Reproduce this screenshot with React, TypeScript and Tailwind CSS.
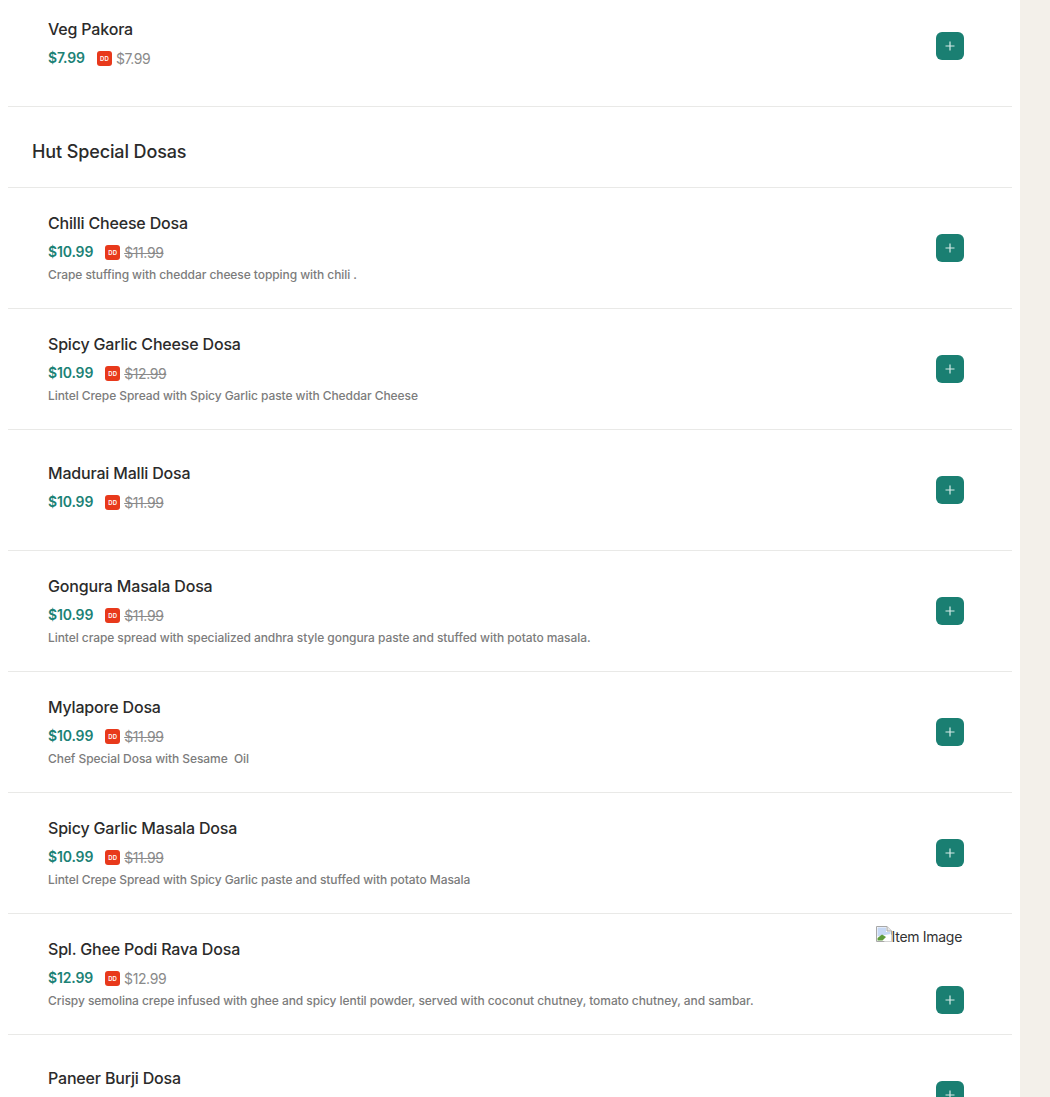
import React from 'react';

type Item = {
  name: string;
  price: string;
  oldPrice: string;
  strike?: boolean;
  desc?: string;
  image?: boolean;
};

const FONT = "font-['Inter','Noto_Sans',sans-serif]";

const special: Item[] = [
  { name: 'Chilli Cheese Dosa', price: '$10.99', oldPrice: '$11.99', strike: true, desc: 'Crape stuffing with cheddar cheese topping with chili .' },
  { name: 'Spicy Garlic Cheese Dosa', price: '$10.99', oldPrice: '$12.99', strike: true, desc: 'Lintel Crepe Spread with Spicy Garlic paste with Cheddar Cheese' },
  { name: 'Madurai Malli Dosa', price: '$10.99', oldPrice: '$11.99', strike: true },
  { name: 'Gongura Masala Dosa', price: '$10.99', oldPrice: '$11.99', strike: true, desc: 'Lintel crape spread with specialized andhra style gongura paste and stuffed with potato masala.' },
  { name: 'Mylapore Dosa', price: '$10.99', oldPrice: '$11.99', strike: true, desc: 'Chef Special Dosa with Sesame  Oil' },
  { name: 'Spicy Garlic Masala Dosa', price: '$10.99', oldPrice: '$11.99', strike: true, desc: 'Lintel Crepe Spread with Spicy Garlic paste and stuffed with potato Masala' },
  { name: 'Spl. Ghee Podi Rava Dosa', price: '$12.99', oldPrice: '$12.99', image: true, desc: 'Crispy semolina crepe infused with ghee and spicy lentil powder, served with coconut chutney, tomato chutney, and sambar.' },
  { name: 'Paneer Burji Dosa', price: '$10.99', oldPrice: '$11.99', strike: true },
];

const BrokenImage = () => (
  <svg width="16" height="16" viewBox="0 0 16 16" className="shrink-0">
    <path d="M.5 .5H11L15.5 5V15.5H.5Z" fill="#fff" stroke="#a8a8a8" />
    <path d="M11 .5V5H15.5" fill="#e8e8e8" stroke="#a8a8a8" />
    <path d="M1.5 1.5H10V6H14.5V8L1.5 10.5Z" fill="#c6d8f4" />
    <path d="M1.5 14.5V12L6 8.5L10 11L6.5 14.5Z" fill="#5e9c3c" />
    <path d="M8 15.5L15.5 8.5V15.5Z" fill="#fff" />
  </svg>
);

const AddButton = () => (
  <button className="flex h-7 w-7 items-center justify-center rounded-md bg-[#1a7f72]">
    <svg width="10" height="10" viewBox="0 0 10 10">
      <path d="M5 .5V9.5M.5 5H9.5" stroke="#d5ece8" strokeWidth="1.2" />
    </svg>
  </button>
);

const Row = ({ item, first }: { item: Item; first?: boolean }) => (
  <div className={`flex h-[121px] shrink-0 items-center border-b border-[#e9e9e7] pl-10 pr-12 ${first ? 'mt-[-14px]' : ''}`}>
    <div className={`min-w-0 flex-1 ${item.desc ? 'pb-[1px]' : 'pb-[8px]'}`}>
      <div className="text-[16px] leading-6 font-medium tracking-[-0.18px] text-[#2b2b2b]">{item.name}</div>
      <div className="mt-[6px] flex h-5 items-center">
        <span className="text-[14px] font-semibold tracking-[-0.15px] text-[#1c8276]">{item.price}</span>
        <span className="ml-3 mt-[3px] flex h-[15px] w-[15px] items-center justify-center rounded-[3px] bg-[#e8391b] text-[6px] leading-none font-semibold text-white">DD</span>
        <span className={`ml-1 mt-[2px] text-[14px] tracking-[-0.4px] text-[#8a8a8a] ${item.strike ? 'line-through' : ''}`}>{item.oldPrice}</span>
      </div>
      {item.desc && <div className="mt-[5px] whitespace-pre text-[12px] leading-[18px] font-medium tracking-[-0.07px] text-[#7c7c7c]">{item.desc}</div>}
    </div>
    <div className={`flex h-full flex-col items-end ${item.image ? 'justify-between pt-3 pb-5' : 'justify-center'}`}>
      {item.image && (
        <div className="mr-[2px] flex h-[21px] items-start whitespace-nowrap text-[14px] leading-[21px] tracking-[-0.3px] text-[#333]">
          <BrokenImage />
          <span>Item Image</span>
        </div>
      )}
      <AddButton />
    </div>
  </div>
);

export default function App() {
  return (
    <div className={`flex h-[1097px] w-full overflow-hidden bg-white ${FONT}`}>
      <main className="flex w-[1020px] shrink-0 flex-col px-2">
        <Row first item={{ name: 'Veg Pakora', price: '$7.99', oldPrice: '$7.99' }} />
        <div className="flex h-[81px] shrink-0 items-center border-b border-[#e9e9e7] pl-6 pt-2">
          <h2 className="text-[18px] font-medium tracking-[-0.12px] text-[#2b2b2b]">Hut Special Dosas</h2>
        </div>
        {special.map((item) => (
          <Row key={item.name} item={item} />
        ))}
      </main>
      <aside className="flex-1 bg-[#f3f0ea]" />
    </div>
  );
}
